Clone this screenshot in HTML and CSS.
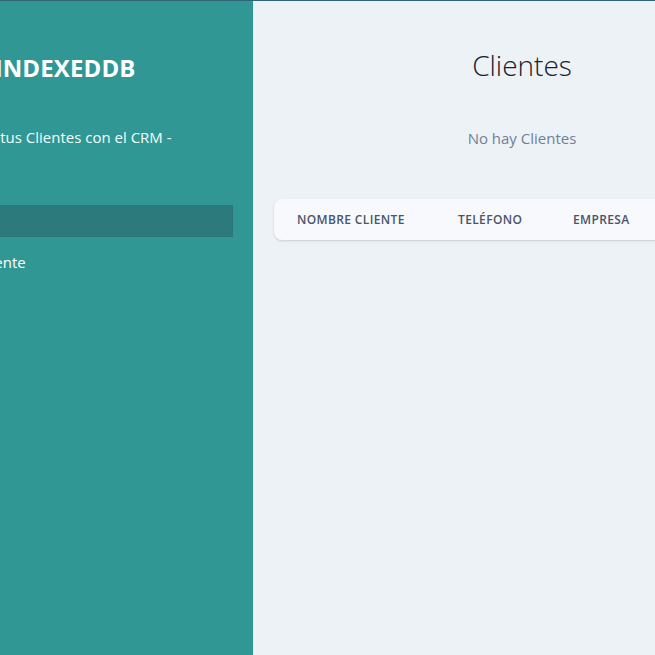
FILE: index.html
```html
<!DOCTYPE html>
<html lang="es">
<head>
<meta charset="utf-8">
<title>CRM - IndexedDB</title>
<link rel="stylesheet" href="styles.css">
</head>
<body>
<div class="app">
  <aside class="sidebar">
    <h2 class="brand">CRM - INDEXEDDB</h2>
    <p class="tagline">Administra tus Clientes con el CRM - IndexedDB</p>
    <nav class="nav">
      <a class="nav-link active" href="#">Clientes</a>
      <a class="nav-link" href="#">Nuevo Cliente</a>
    </nav>
  </aside>
  <main class="main">
    <h1 class="title">Clientes</h1>
    <p class="empty">No hay Clientes</p>
    <div class="table">
      <div class="thead">
        <span class="th">Nombre Cliente</span>
        <span class="th">Teléfono</span>
        <span class="th">Empresa</span>
        <span class="th">Acciones</span>
      </div>
    </div>
  </main>
</div>
</body>
</html>
```

FILE: styles.css
```css
html, body {
  margin: 0;
  padding: 0;
  height: 100%;
}
body {
  overflow: hidden;
  font-family: "Open Sans", "Noto Sans", sans-serif;
  background: #edf2f7;
  border-top: 1px solid #2f6477;
  box-sizing: border-box;
}
.app {
  display: flex;
  margin-left: -100px;
  width: 891px;
  min-height: 100vh;
}
.sidebar {
  width: 353px;
  flex: none;
  box-sizing: border-box;
  background: #319795;
  padding: 51px 20px 20px;
  color: #fff;
}
.brand {
  margin: 0;
  font-size: 24px;
  line-height: 32px;
  font-weight: 700;
  letter-spacing: 0.005em;
}
.tagline {
  margin: 41px 0 0;
  font-size: 15px;
  line-height: 24px;
  color: #f0fffc;
}
.nav {
  margin-top: 32px;
  display: flex;
  flex-direction: column;
  gap: 9px;
}
.nav-link {
  display: block;
  height: 32px;
  line-height: 32px;
  padding-left: 8px;
  font-size: 15px;
  color: #fff;
  text-decoration: none;
}
.nav-link.active {
  background: #2c7a7b;
  color: #2c7a7b;
  box-shadow: inset 0 0 0 1px #2b7677;
}
.main {
  width: 538px;
  flex: none;
  box-sizing: border-box;
  padding: 46px 21px 20px;
  text-align: center;
}
.title {
  margin: 0;
  font-size: 28px;
  line-height: 36px;
  font-weight: 300;
  color: #1a202c;
}
.empty {
  margin: 43px 0 0;
  font-size: 15px;
  line-height: 24px;
  color: #718096;
}
.table {
  margin-top: 49px;
  text-align: left;
  background: #f7f9fc;
  border-radius: 8px;
  box-shadow: 0 1px 3px rgba(0,0,0,0.1), 0 1px 2px rgba(0,0,0,0.06);
}
.thead {
  display: grid;
  grid-template-columns: 161px 115px 115px 1fr;
  height: 41px;
  align-items: center;
  padding-left: 23px;
}
.th {
  font-size: 12px;
  font-weight: 600;
  text-transform: uppercase;
  letter-spacing: 0.03em;
  color: #4a5568;
}
```
